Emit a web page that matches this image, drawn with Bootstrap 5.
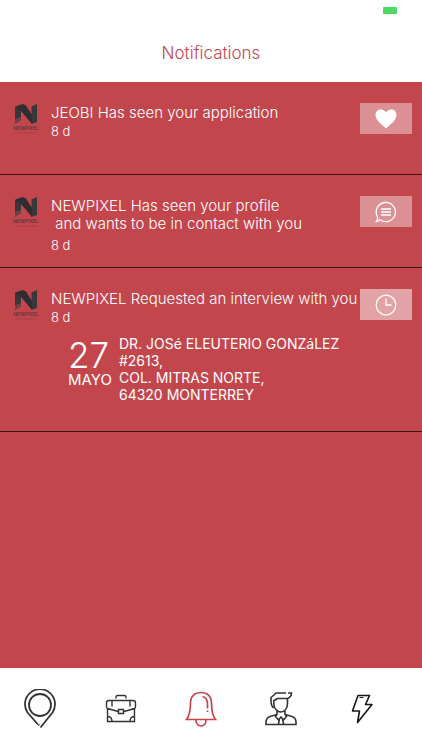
<!DOCTYPE html>
<html lang="en">
<head>
<meta charset="utf-8">
<meta name="viewport" content="width=device-width, initial-scale=1">
<title>Notifications</title>
<link href="https://cdn.jsdelivr.net/npm/bootstrap@5.3.0/dist/css/bootstrap.min.css" rel="stylesheet">
<style>
  :root { --brand: #c4464d; }
  body { font-family: Inter, "Liberation Sans", sans-serif; font-size: 15px; line-height: 18px; font-weight: 300; }
  .top-bar { height: 82px; }
  .page-title { color: var(--brand); font-size: 17px; line-height: 22px; padding-bottom: 18px; font-weight: 300; }
  .battery { width: 14px; height: 7px; top: 7px; right: 25px; background: #4cd964; border-radius: 1px; }
  .feed { background: var(--brand); color: #fff; }
  .notice { border-bottom: 1px solid #3a1217; padding: 21px 10px 13px 11px; min-height: 93px; }
  .brand-logo { width: 30px; height: 34px; }
  .notice-body { margin-left: 10px; min-width: 0; flex: 1 1 0; padding-top: 1px; }
  .age { font-size: 13px; }
  .age-low { padding-top: 3px; }
  .action { width: 52px; height: 31px; background: rgba(255,255,255,.4); }
  .action-light { background: rgba(255,255,255,.5); }
  .interview { margin: 9px 0 15px 17px; gap: 7px; font-weight: 400; }
  .day { font-size: 35px; line-height: 32px; padding-top: 4px; font-weight: 300; }
  .place { line-height: 17px; font-size: 14px; }
  .tabs { height: 82px; padding-right: 20px; }
  .tab-link { color: #333; }
  .tab-link.active { color: var(--brand); }
</style>
<script src="https://cdn.jsdelivr.net/npm/bootstrap@5.3.0/dist/js/bootstrap.bundle.min.js"></script>
</head>
<body class="d-flex flex-column min-vh-100 bg-white">

<svg class="d-none" aria-hidden="true">
  <symbol id="logo" viewBox="0 0 30 34">
    <path fill="#3b3438" d="M4 4l6-2.500V17l-6 4z"/>
    <path fill="#38373b" d="M20.500 3.500 26 1v18l-5.500 2z"/>
    <path fill="#2f2d31" d="M4 4l8-3 3 1.500L21 12v9L10 8z"/>
    <path fill="#6b4248" d="M4 16l6-2v3l-6 4z"/>
    <text x="15" y="27" text-anchor="middle" font-size="5" font-weight="500" fill="#53343b">NEWPIXEL</text>
    <text x="15" y="31" text-anchor="middle" font-size="2" fill="#8a3a42">DIGITAL ENGAGEMENT</text>
  </symbol>
</svg>

<header class="top-bar position-relative d-flex align-items-end justify-content-center">
  <span class="battery position-absolute"></span>
  <h1 class="page-title m-0">Notifications</h1>
</header>

<main class="feed flex-grow-1">
  <article class="notice d-flex align-items-start">
    <svg class="brand-logo flex-shrink-0" role="img" aria-label="Newpixel"><use href="#logo"/></svg>
    <div class="notice-body">
      <div>JEOBI Has seen your application</div>
      <div class="age">8 d</div>
    </div>
    <button type="button" class="action btn border-0 rounded-0 p-0 d-flex align-items-center justify-content-center flex-shrink-0" aria-label="Like">
      <svg width="22" height="20" viewBox="0 0 22 20"><path fill="#fff" d="M11 19.500C8 16.500 .5 11.500 .5 6 .5 2.500 3 .5 5.700 .5 8 .5 10 1.600 11 3.500 12 1.600 14 .5 16.300 .5 19 .5 21.500 2.500 21.500 6 21.500 11.500 14 16.500 11 19.500z"/></svg>
    </button>
  </article>

  <article class="notice d-flex align-items-start">
    <svg class="brand-logo flex-shrink-0" role="img" aria-label="Newpixel"><use href="#logo"/></svg>
    <div class="notice-body">
      <div>NEWPIXEL Has seen your profile<br>&nbsp;and wants to be in contact with you</div>
      <div class="age age-low">8 d</div>
    </div>
    <button type="button" class="action btn border-0 rounded-0 p-0 d-flex align-items-center justify-content-center flex-shrink-0" aria-label="Message">
      <svg width="22" height="22" viewBox="0 0 22 22" fill="none" stroke="#fff" stroke-width="1.300"><path d="M5 18.700A9.600 9.600 0 1 0 2.300 15.500C3 17 2.800 18.500 1.300 20.500 3 20.700 4.200 20 5 18.700z"/><path d="M6 8h10M6 11h10M6 14h10"/></svg>
    </button>
  </article>

  <article class="notice d-flex align-items-start">
    <svg class="brand-logo flex-shrink-0" role="img" aria-label="Newpixel"><use href="#logo"/></svg>
    <div class="notice-body">
      <div class="text-nowrap">NEWPIXEL Requested an interview with you</div>
      <div class="age">8 d</div>
      <div class="interview d-flex align-items-start">
        <div class="flex-shrink-0">
          <div class="day">27</div>
          <div>MAYO</div>
        </div>
        <address class="place m-0">DR. JOSé ELEUTERIO GONZáLEZ #2613,<br>COL. MITRAS NORTE,<br>64320 MONTERREY</address>
      </div>
    </div>
    <button type="button" class="action action-light btn border-0 rounded-0 p-0 d-flex align-items-center justify-content-center flex-shrink-0" aria-label="Schedule">
      <svg width="22" height="22" viewBox="0 0 22 22" fill="none" stroke="#fff" stroke-width="1.300"><circle cx="11" cy="11" r="9.800"/><path d="M11 4.500V11h5.500"/></svg>
    </button>
  </article>
</main>

<nav class="tabs d-flex align-items-center bg-white" aria-label="Main">
  <a href="#map" class="tab-link col d-flex justify-content-center" aria-label="Map">
    <svg width="34" height="40" viewBox="0 0 34 40" fill="none" stroke="currentColor" stroke-width="1.800"><path d="M15 35.500 4.500 23.500A15 15 0 1 1 29.500 23.500L17.500 38.500"/><circle cx="17" cy="16" r="11"/><path d="M15.500 35.500l.7 1"/></svg>
  </a>
  <a href="#jobs" class="tab-link col d-flex justify-content-center" aria-label="Jobs">
    <svg width="34" height="30" viewBox="0 0 34 30" fill="none" stroke="currentColor" stroke-width="1.400"><path d="M12 4.500V3q0-1.500 1.500-1.500h7Q22 1.500 22 3v1.500"/><path d="M3.500 14.500Q2.500 14 2.500 12V9Q2.500 6.500 5 6.500H29Q31.500 6.500 31.500 9v3q0 2-1 2.500L20 17.500M3.500 14.500l10.500 3M3.500 14.500v13h27v-13M14.500 15.500h5v4h-5zM8 7v5.500M26 7v5.500M3.500 22.500q4.500 0 4.500 5M30.500 22.500q-4.500 0-4.500 5"/></svg>
  </a>
  <a href="#notifications" class="tab-link active col d-flex justify-content-center" aria-label="Notifications" aria-current="page">
    <svg width="34" height="38" viewBox="0 0 34 38" fill="none" stroke="currentColor" stroke-width="1.700"><path d="M2.500 29.500C6 25 6.500 20 6.500 13 6.500 6 11 2.500 17 2.500S27.500 6 27.500 13c0 7 .5 12 4 16.500zM12 30c0 3.500 2 6 5 6s5-2.500 5-6M18.500 6.500c3.500.8 5 3.500 5 7.500v4.500M23.500 20.500v1.500"/></svg>
  </a>
  <a href="#profile" class="tab-link col d-flex justify-content-center" aria-label="Profile">
    <svg width="34" height="36" viewBox="0 0 34 36" fill="none" stroke="currentColor" stroke-width="1.600"><path d="M9.500 17C7 15 7 12 7 9V6.500L10 4l2-2h10M24 2h3.500c0 3-1.500 4.500-4 5.500v5c0 5-3 8.500-6.500 8.500S9.800 17.500 9.800 13V9.500Q12 9 13 7.500h11M13 20v3.500l-7 2Q2 27 2 31v2.500h30V31q0-4-4-5.500l-7-2V20M13 23l-1.500 2.500 3 3.500L17 26l2.500 3 3-3.500L21 23M15.500 27.500 14.500 33M18.500 27.500l1 5.500"/></svg>
  </a>
  <a href="#activity" class="tab-link col d-flex justify-content-center" aria-label="Activity">
    <svg width="22" height="30" viewBox="0 0 22 30" fill="none" stroke="#161616" stroke-width="1.600" stroke-linejoin="round"><path d="M7 1.500h11.500L14.500 10.500H21L6.500 28.500 8.500 17H1.500z"/><path stroke-width="1" d="M8.500 3.500h4"/></svg>
  </a>
</nav>
</body>
</html>
